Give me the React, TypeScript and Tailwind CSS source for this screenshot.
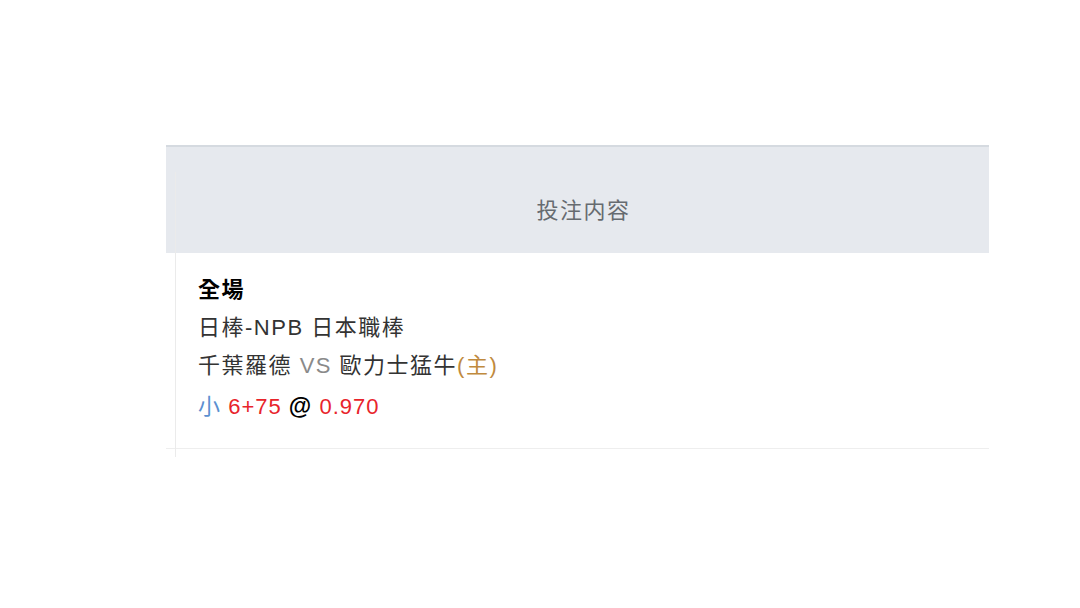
export default function App() {
  return (
    <div className="w-[1080px] h-[608px] bg-white relative" style={{ fontFamily: '"Liberation Sans", "Noto Sans CJK TC", sans-serif' }}>
      <div className="pt-[145px] pl-[166px]">
        <div className="w-[823px]">
          <div className="h-[108px] bg-[#e6e9ee] border-t-2 border-[#d5dae0] flex items-center justify-center pt-[17px] pl-[12px]">
            <span className="text-[22px] tracking-[1.5px] text-[#666b70]" style={{ fontFamily: '"Noto Sans CJK TC", sans-serif' }}>投注内容</span>
          </div>
          <div className="pl-[32px] pt-[18px] pb-[22px] border-b border-[#eeeeee] text-[22px] tracking-[1.5px] leading-[38px] text-[#333]">
            <div className="font-bold text-black">全場</div>
            <div>日棒-NPB 日本職棒</div>
            <div>
              千葉羅德 <span className="text-[#8a8a8a]">VS</span> 歐力士猛牛<span className="text-[#c08a3e]">(主)</span>
            </div>
            <div className="mt-[2px] tracking-[1px]">
              <span className="text-[#5b8fd0]">小</span> <span className="text-[#e8242b]">6+75</span>{' '}
              <span className="font-bold text-black text-[23px]">@</span> <span className="text-[#e8242b]">0.970</span>
            </div>
          </div>
        </div>
      </div>
      <div className="absolute left-[175px] top-[172px] w-px h-[285px] bg-[#ebebeb]" />
    </div>
  )
}
